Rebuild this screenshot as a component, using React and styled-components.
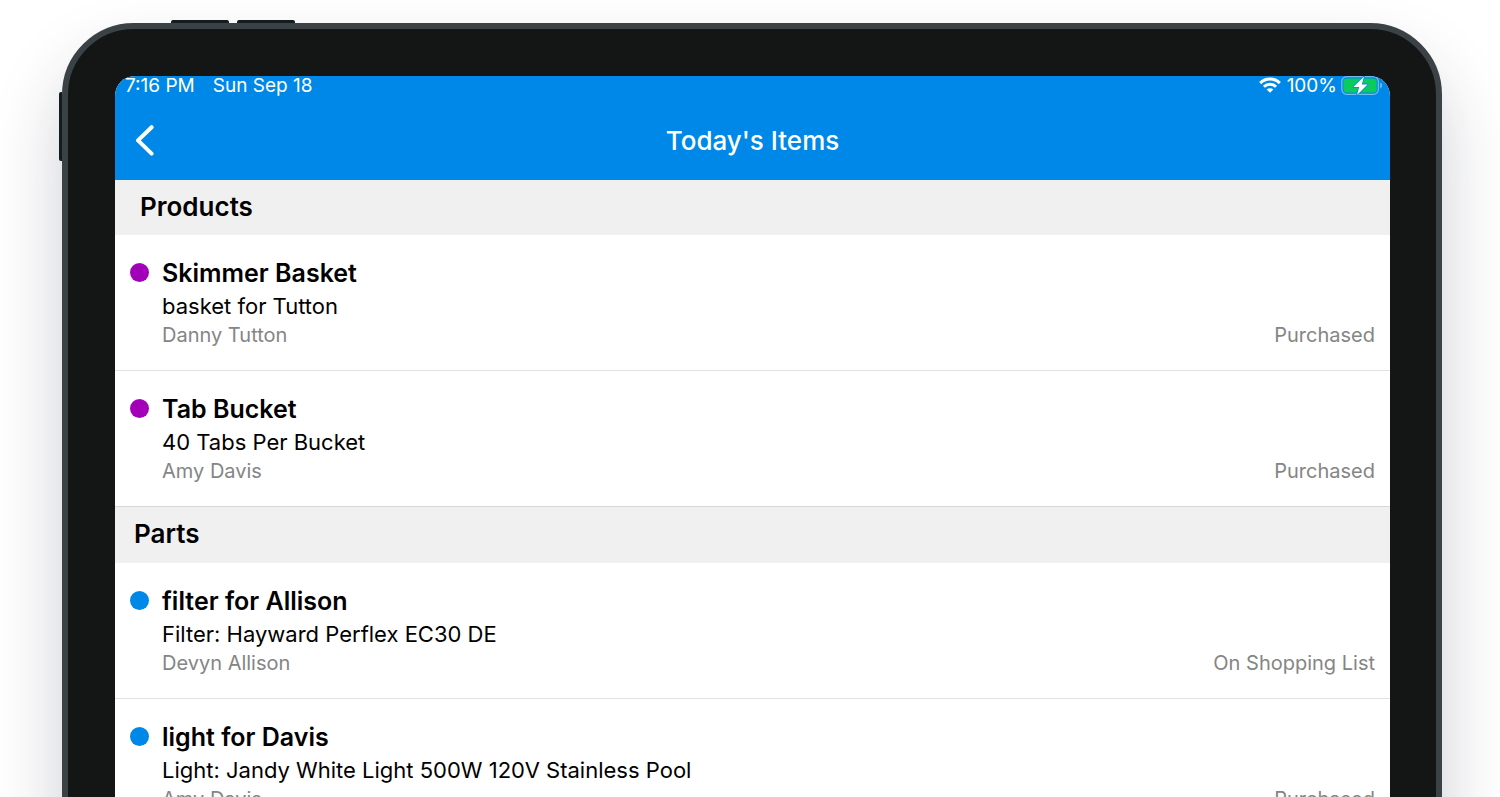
import React from "react";
import { styled, createGlobalStyle } from "styled-components";

const GlobalStyle = createGlobalStyle`
  * {
    box-sizing: border-box;
  }
  body {
    margin: 0;
    background: #fff;
    font-family: Inter, "Liberation Sans", sans-serif;
  }
  h1, h2, h3, p, ul {
    margin: 0;
    padding: 0;
  }
`;

const Page = styled.main`
  height: 100vh;
  padding: 23px 58px 0 62px;
  overflow: hidden;
`;

const Tablet = styled.div`
  position: relative;
  min-height: 100vh;
  padding: 47px 46px 47px 47px;
  border: 6px solid #3b4246;
  border-radius: 72px;
  background: #131614;
  box-shadow: 0 40px 70px rgba(30, 35, 60, 0.22);
`;

const VolumeButton = styled.span`
  position: absolute;
  top: -9px;
  left: ${(props) => props.$left}px;
  width: 58px;
  height: 3px;
  border-radius: 2px 2px 0 0;
  background: #131c1e;
`;

const PowerButton = styled.span`
  position: absolute;
  top: 63px;
  left: -9px;
  width: 3px;
  height: 69px;
  border-radius: 2px 0 0 2px;
  background: #131c1e;
`;

const Screen = styled.div`
  border-radius: 20px;
  background: #fff;
  overflow: hidden;
`;

const TopArea = styled.header`
  background: #0088e8;
  color: #fff;
`;

const StatusBar = styled.div`
  height: 26px;
  padding: 0 8px 0 10px;
  display: flex;
  justify-content: space-between;
  align-items: flex-start;
  font-size: 19px;
  line-height: 20px;
`;

const StatusGroup = styled.div`
  height: 20px;
  display: flex;
  align-items: center;
  gap: ${(props) => props.$gap}px;
`;

const NavBar = styled.div`
  height: 78px;
  padding: 0 16px;
  display: grid;
  grid-template-columns: 40px 1fr 40px;
  align-items: center;
`;

const BackButton = styled.button`
  width: 40px;
  height: 40px;
  padding: 0;
  display: flex;
  align-items: center;
  border: none;
  background: none;
  color: #fff;
  cursor: pointer;
`;

const Title = styled.h1`
  font-size: 26px;
  line-height: 32px;
  font-weight: 500;
  text-align: center;
`;

const SectionTitle = styled.h2`
  height: ${(props) => (props.$first ? 55 : 56)}px;
  padding: 0 ${(props) => (props.$first ? 25 : 19)}px;
  background: #f0f0f0;
  font-size: 26px;
  line-height: 54px;
  font-weight: 600;
`;

const ItemList = styled.ul`
  list-style: none;
`;

const Item = styled.li`
  padding: 20px 15px 21px;
  display: grid;
  grid-template-columns: 20px 1fr auto;
  column-gap: 12px;
  border-bottom: 1px solid #e0e2e2;
  &:last-child {
    border-bottom-color: #d6d8d8;
  }
`;

const Dot = styled.span`
  width: 19px;
  height: 19px;
  margin-top: 8px;
  border-radius: 50%;
  background: ${(props) => props.$color};
`;

const ItemName = styled.h3`
  font-size: 25px;
  line-height: 36px;
  font-weight: 600;
`;

const ItemDetail = styled.p`
  font-size: 22px;
  line-height: 30px;
`;

const Muted = styled.p`
  align-self: end;
  font-size: 20px;
  line-height: 28px;
  color: #858585;
`;

const sections = [
  {
    title: "Products",
    color: "#a100b8",
    items: [
      { name: "Skimmer Basket", detail: "basket for Tutton", customer: "Danny Tutton", status: "Purchased" },
      { name: "Tab Bucket", detail: "40 Tabs Per Bucket", customer: "Amy Davis", status: "Purchased" },
    ],
  },
  {
    title: "Parts",
    color: "#0088e8",
    items: [
      { name: "filter for Allison", detail: "Filter: Hayward Perflex EC30 DE", customer: "Devyn Allison", status: "On Shopping List" },
      { name: "light for Davis", detail: "Light: Jandy White Light 500W 120V Stainless Pool", customer: "Amy Davis", status: "Purchased" },
    ],
  },
];

const WifiIcon = () => (
  <svg width="22" height="18" viewBox="0 0 22 18" fill="none" stroke="#fff" strokeWidth="3" aria-hidden="true">
    <path d="M1.2 6.1a13.9 13.9 0 0 1 19.6 0" />
    <path d="M4.9 9.8a8.7 8.7 0 0 1 12.2 0" />
    <path d="M11 15.8 7.7 12.6a4.7 4.7 0 0 1 6.6 0Z" fill="#fff" stroke="none" />
  </svg>
);

const BatteryIcon = () => (
  <svg width="41" height="20" viewBox="0 0 41 20" aria-hidden="true">
    <rect x="0.8" y="0.7" width="36.6" height="17.6" rx="5" fill="none" stroke="#6fbcf3" strokeWidth="1.3" />
    <rect x="2.5" y="2.4" width="33.2" height="14.2" rx="3.4" fill="#0acb5b" />
    <path d="M39.4 6.6c1.9.6 1.9 5.2 0 5.8Z" fill="#8ccaf6" />
    <path
      d="M23 .4 12.4 11h5.8l-2.2 8L26.6 8.4h-5.8Z"
      fill="#fff"
      stroke="#0088e8"
      strokeWidth="1.6"
      paintOrder="stroke"
      strokeLinejoin="round"
    />
  </svg>
);

const BackIcon = () => (
  <svg width="28" height="32" viewBox="0 0 28 32" fill="none" aria-hidden="true">
    <path
      d="M20.6 2.2 7 15.4l13.6 13.2"
      stroke="#fff"
      strokeWidth="4"
      strokeLinecap="round"
      strokeLinejoin="round"
    />
  </svg>
);

const App = () => {
  return (
    <Page>
      <GlobalStyle />
      <Tablet>
        <VolumeButton $left={103} />
        <VolumeButton $left={169} />
        <PowerButton />
        <Screen>
          <TopArea>
            <StatusBar>
              <StatusGroup $gap={18}>
                <span>7:16 PM</span>
                <span>Sun Sep 18</span>
              </StatusGroup>
              <StatusGroup $gap={6}>
                <WifiIcon />
                <StatusGroup $gap={4}>
                  <span>100%</span>
                  <BatteryIcon />
                </StatusGroup>
              </StatusGroup>
            </StatusBar>
            <NavBar>
              <BackButton type="button" aria-label="Back">
                <BackIcon />
              </BackButton>
              <Title>Today's Items</Title>
            </NavBar>
          </TopArea>
          {sections.map((section, index) => (
            <section key={section.title}>
              <SectionTitle $first={index === 0}>{section.title}</SectionTitle>
              <ItemList>
                {section.items.map((item) => (
                  <Item key={item.name}>
                    <Dot $color={section.color} />
                    <div>
                      <ItemName>{item.name}</ItemName>
                      <ItemDetail>{item.detail}</ItemDetail>
                      <Muted>{item.customer}</Muted>
                    </div>
                    <Muted>{item.status}</Muted>
                  </Item>
                ))}
              </ItemList>
            </section>
          ))}
        </Screen>
      </Tablet>
    </Page>
  );
};

export default App;
